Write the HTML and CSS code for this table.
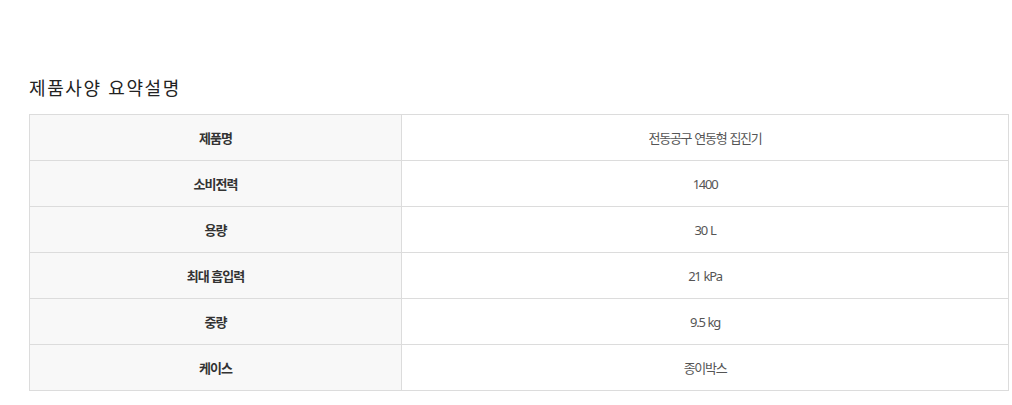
FILE: index.html
```html
<!DOCTYPE html>
<html lang="ko">
<head>
<meta charset="utf-8">
<title>제품사양 요약설명</title>
<link rel="stylesheet" href="styles.css">
</head>
<body>
<section class="spec">
  <h2 class="spec-title">제품사양 요약설명</h2>
  <table class="spec-table">
    <colgroup><col class="col-head"><col class="col-val"></colgroup>
    <tbody>
      <tr><th>제품명</th><td>전동공구 연동형 집진기</td></tr>
      <tr><th>소비전력</th><td>1400</td></tr>
      <tr><th>용량</th><td>30 L</td></tr>
      <tr><th>최대 흡입력</th><td>21 kPa</td></tr>
      <tr><th>중량</th><td>9.5 kg</td></tr>
      <tr><th>케이스</th><td>종이박스</td></tr>
    </tbody>
  </table>
</section>
</body>
</html>
```
FILE: styles.css
```css
html, body {
  margin: 0;
  padding: 0;
  background: #fff;
  font-family: "Noto Sans", "Noto Sans CJK KR", sans-serif;
}
.spec {
  padding: 74px 4px 0 29px;
}
.spec-title {
  margin: 0 0 14px;
  font-family: "Noto Sans CJK KR", sans-serif;
  font-size: 18px;
  font-weight: 400;
  line-height: 26px;
  letter-spacing: 1.6px;
  color: #222;
}
.spec-table {
  width: 980px;
  border-collapse: collapse;
  table-layout: fixed;
}
.col-head { width: 372px; }
.spec-table th,
.spec-table td {
  height: 45px;
  padding: 0;
  border: 1px solid #dcdcdc;
  text-align: center;
  vertical-align: middle;
  font-size: 13px;
}
.spec-table th {
  background: #f8f8f8;
  color: #333;
  font-weight: 700;
  font-family: "Noto Sans CJK KR", sans-serif;
  letter-spacing: -1px;
}
.spec-table td {
  color: #555;
  font-weight: 400;
  letter-spacing: -1.3px;
  word-spacing: 1px;
}
```
